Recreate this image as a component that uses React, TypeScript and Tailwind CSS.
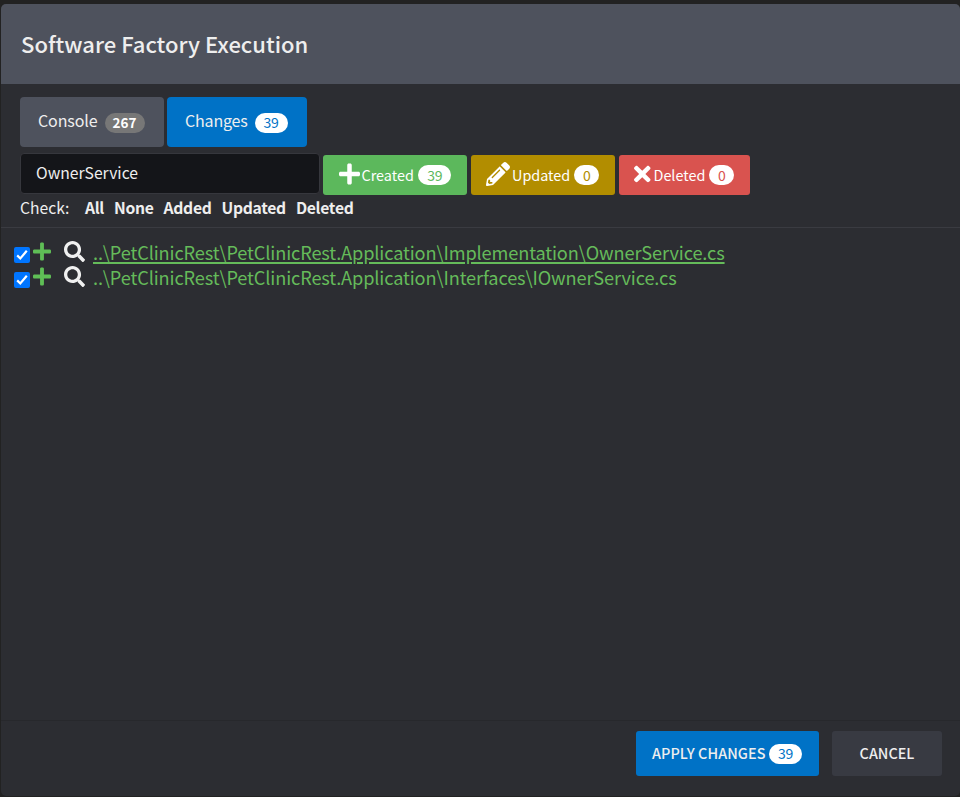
import { useState } from "react";
import { FaPencilAlt, FaPlus, FaSearch, FaTimes } from "react-icons/fa";

const files = [
  { path: "..\\PetClinicRest\\PetClinicRest.Application\\Implementation\\OwnerService.cs", active: true },
  { path: "..\\PetClinicRest\\PetClinicRest.Application\\Interfaces\\IOwnerService.cs", active: false },
];

const badge =
  "inline-flex h-5 items-center justify-center rounded-full bg-white text-[14px] leading-5 tracking-[-0.2px]";

function FileRow({ path, active }: { path: string; active: boolean }) {
  const [checked, setChecked] = useState(true);
  return (
    <li className="flex h-[25px] items-start">
      <button
        onClick={() => setChecked(!checked)}
        className="mt-[6px] flex size-4 items-center justify-center rounded-[2px] bg-[#0075ff]"
      >
        {checked && (
          <svg viewBox="0 0 16 16" className="size-4" fill="none" stroke="white" strokeWidth="2.2">
            <path d="M3.2 8.4 6.3 11.5 12.8 3.8" />
          </svg>
        )}
      </button>
      <FaPlus className="ml-[3px] h-[21px] w-[18px] text-[#5fbe56]" />
      <FaSearch className="ml-[12.5px] size-[21px] text-[#f0f0f0]" />
      <span
        className={
          active
            ? "ml-[8.5px] text-[18.2px] leading-[23px] tracking-[-0.13px] text-[#65bb5a] underline decoration-2 underline-offset-[2px]"
            : "ml-[8.5px] text-[18.2px] leading-[23px] tracking-[-0.13px] text-[#65bb5a]"
        }
      >
        {path}
      </span>
    </li>
  );
}

export default function App() {
  const [filter, setFilter] = useState("OwnerService");
  return (
    <div className="h-[797px] w-[960px] overflow-hidden bg-[#222222] pt-1 pl-px font-['Noto_Sans_CJK_SC',sans-serif] whitespace-nowrap text-[#eeeeee]">
      <div className="flex h-[792px] w-[959px] flex-col overflow-hidden rounded-[5px] bg-[#2c2d32]">
        <header className="flex h-20 items-center bg-[#4e525d] pb-0.5 pl-5">
          <h1 className="text-[22px] leading-8 font-medium tracking-[0.02px]">Software Factory Execution</h1>
        </header>

        <div className="flex h-[143px] flex-col pt-[13px] pl-[19px]">
          <nav className="flex gap-[3px] text-[16px]">
            <button className="flex h-[50px] w-36 items-center rounded-[4px] bg-[#4e525d] pl-[18px]">
              <span className="-mt-1 leading-6 tracking-[-0.1px]">Console</span>
              <span className="ml-[7px] mt-0.5 inline-flex h-5 w-10 items-center justify-center rounded-full bg-[#777777] pb-0.5 text-[13.5px] leading-5 font-bold text-white">
                267
              </span>
            </button>
            <button className="flex h-[50px] w-[140px] items-center rounded-[4px] bg-[#0072c6] pl-[18px]">
              <span className="-mt-1 leading-6 tracking-[-0.18px]">Changes</span>
              <span className={`${badge} ml-[7px] mt-0.5 w-[33px] pb-0.5 text-[#0072c6]`}>39</span>
            </button>
          </nav>

          <div className="mt-1.5 flex items-start text-[14.4px]">
            <input
              value={filter}
              onChange={(e) => setFilter(e.target.value)}
              className="h-[41px] w-[300px] rounded-[4px] border border-[#36373d] bg-[#141519] pb-[3px] pl-[15px] text-[15.7px] outline-none"
            />
            <button className="mt-0.5 ml-[3px] flex h-10 w-36 items-center rounded-[3px] bg-[#5cb85c] pl-[15.5px] text-white">
              <FaPlus className="-mt-[3px] h-6 w-[21px]" />
              <span className="ml-[2px]">Created</span>
              <span className={`${badge} ml-[4.5px] w-[33px] text-[#5cb85c]`}>39</span>
            </button>
            <button className="mt-0.5 ml-1 flex h-10 w-36 items-center rounded-[3px] bg-[#b28d00] pl-[15px] text-white">
              <FaPencilAlt className="-mt-[2px] size-6" />
              <span className="ml-[2px]">Updated</span>
              <span className={`${badge} ml-1 w-[25px] text-[#b28d00]`}>0</span>
            </button>
            <button className="mt-0.5 ml-1 flex h-10 w-[131px] items-center rounded-[3px] bg-[#d9534f] pl-[15px] text-white">
              <FaTimes className="-mt-[2px] h-6 w-[16.5px]" />
              <span className="ml-[3px]">Deleted</span>
              <span className={`${badge} ml-1 w-[25px] text-[#d9534f]`}>0</span>
            </button>
          </div>

          <div className="mt-px flex text-[15.7px] leading-6">
            <span className="mr-[15.5px]">Check:</span>
            <div className="-mt-px flex gap-[10px] font-bold tracking-[-0.3px]">
              <button>All</button>
              <button>None</button>
              <button>Added</button>
              <button>Updated</button>
              <button>Deleted</button>
            </div>
          </div>
        </div>

        <ul className="flex-1 border-t border-[#3a3b41] pt-[13px] pl-[13px]">
          {files.map((file) => (
            <FileRow key={file.path} {...file} />
          ))}
        </ul>

        <footer className="flex h-[76px] justify-end gap-[13px] border-t border-[#27282c] pt-[10px] pr-[18px] text-[14.4px] font-medium">
          <button className="flex h-[45px] w-[183px] items-center rounded-[3px] bg-[#0072c6] pl-4">
            <span className="-mt-0.5 tracking-[0.08px]">APPLY CHANGES</span>
            <span className={`${badge} ml-[3.5px] w-[33px] pb-px font-normal text-[#0072c6]`}>39</span>
          </button>
          <button className="h-[45px] w-[110px] rounded-[3px] bg-[#383a42] pb-0.5">CANCEL</button>
        </footer>
      </div>
    </div>
  );
}
